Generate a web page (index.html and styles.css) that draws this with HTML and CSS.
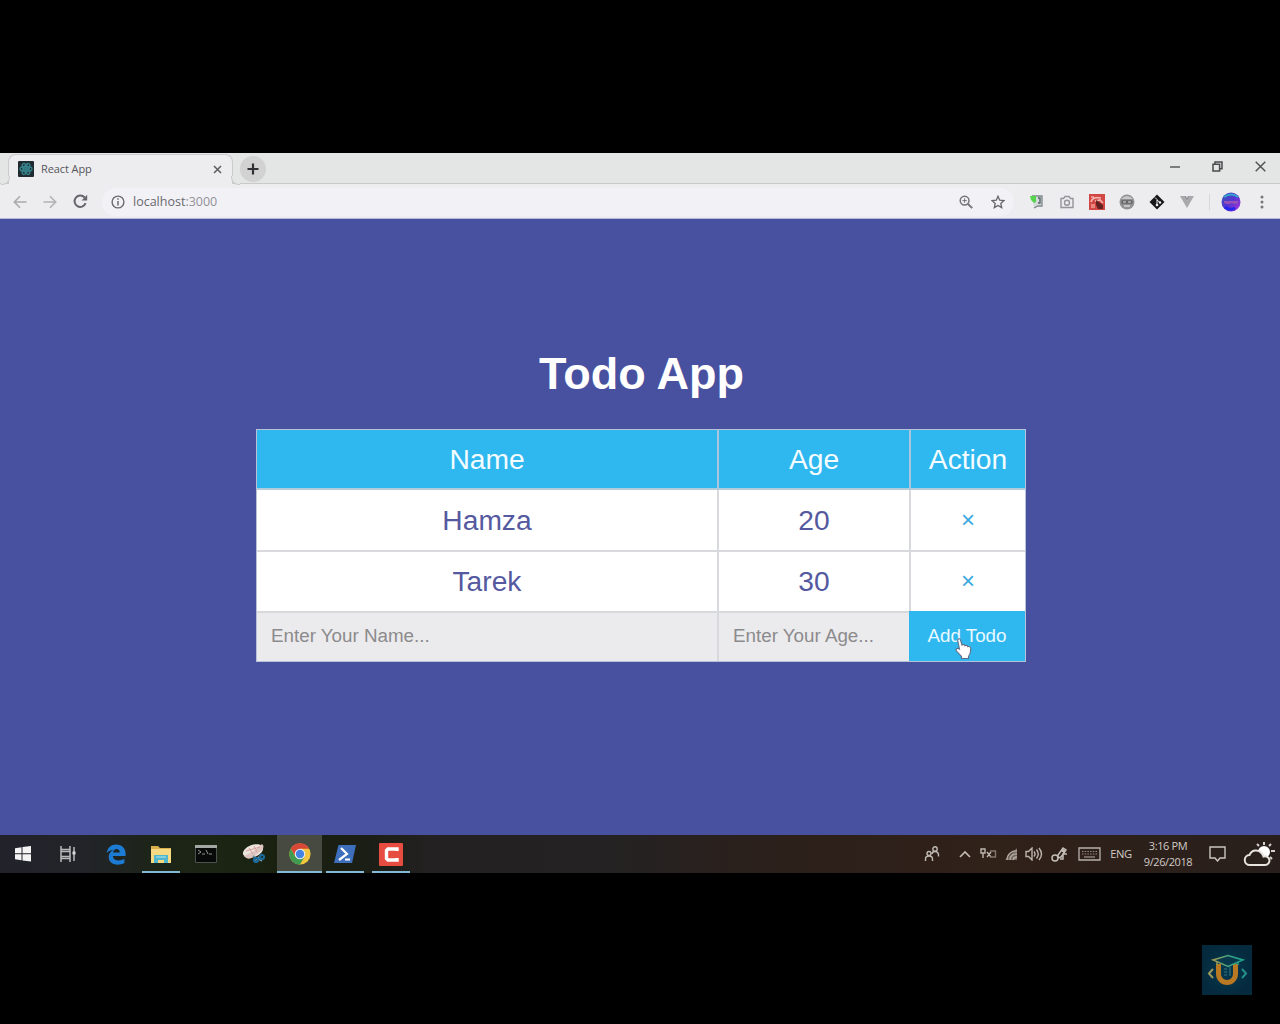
FILE: index.html
```html
<!DOCTYPE html>
<html lang="en">
<head>
<meta charset="utf-8">
<title>React App</title>
<link rel="stylesheet" href="styles.css">
</head>
<body>
<main class="desktop">
  <header class="tabstrip">
    <div class="tab">
      <svg class="favicon" width="16" height="16" viewBox="0 0 16 16"><rect width="16" height="16" rx="1" fill="#202b31"/><g fill="none" stroke="#35808a" stroke-width="1.4"><ellipse cx="8" cy="8" rx="6" ry="2.5"/><ellipse cx="8" cy="8" rx="6" ry="2.5" transform="rotate(60 8 8)"/><ellipse cx="8" cy="8" rx="6" ry="2.5" transform="rotate(120 8 8)"/></g><circle cx="8" cy="8" r="2" fill="#35808a"/></svg>
      <span class="tab-title">React App</span>
      <svg width="9" height="9" viewBox="0 0 9 9"><path d="M1 1l7 7M8 1l-7 7" stroke="#5c5c5f" stroke-width="1.5"/></svg>
    </div>
    <div class="new-tab"><svg width="12" height="12" viewBox="0 0 12 12"><path d="M6 .5v11M.5 6h11" stroke="#303034" stroke-width="2.2"/></svg></div>
    <div class="window-controls">
      <svg width="10" height="12" viewBox="0 0 10 12"><path d="M0 6h10" stroke="#626266" stroke-width="1.6"/></svg>
      <svg width="11" height="11" viewBox="0 0 11 11" fill="none" stroke="#4a4a4d" stroke-width="1.5"><path d="M1 3.200h6.600V10H1zM3 3V1h7v6.800H8"/></svg>
      <svg width="11" height="11" viewBox="0 0 11 11"><path d="M.7.7l9.600 9.600M10.300.7L.7 10.300" stroke="#555558" stroke-width="1.5"/></svg>
    </div>
  </header>

  <nav class="toolbar">
    <div class="nav-buttons">
      <svg width="14" height="14" viewBox="0 0 14 14" fill="none" stroke="#aaaaad" stroke-width="1.6"><path d="M13.500 7H1.500M7 1.300L1.300 7 7 12.700"/></svg>
      <svg width="14" height="14" viewBox="0 0 14 14" fill="none" stroke="#b2b2b5" stroke-width="1.6"><path d="M.5 7h12M7 1.300L12.700 7 7 12.700"/></svg>
      <svg width="15" height="15" viewBox="0 0 15 15"><path d="M12.600 9.200A5.700 5.700 0 1 1 11.600 3.500" fill="none" stroke="#66666a" stroke-width="2"/><path d="M14.200.8v5.600H8.600z" fill="#66666a"/></svg>
    </div>
    <div class="address">
      <svg width="14" height="14" viewBox="0 0 14 14"><circle cx="7" cy="7" r="5.900" fill="none" stroke="#6b6b70" stroke-width="1.400"/><path d="M7 6v4.500M7 3.300v1.500" stroke="#6b6b70" stroke-width="1.500"/></svg>
      <span class="url">localhost<span class="port">:3000</span></span>
      <svg class="magnify" width="14" height="14" viewBox="0 0 14 14" fill="none" stroke="#737379"><circle cx="5.600" cy="5.600" r="4.400" stroke-width="1.500"/><path d="M9 9l4.200 4.200" stroke-width="1.900"/><path d="M3.400 5.600h4.400M5.600 3.400v4.400"/></svg>
      <svg width="14" height="14" viewBox="0 0 14 14"><path d="M7 1.300l1.700 3.900 4.300.4-3.200 2.800.9 4.200L7 10.400l-3.700 2.200.9-4.200L1 5.600l4.300-.4z" fill="none" stroke="#66666b" stroke-width="1.300"/></svg>
    </div>
    <div class="extensions">
      <svg width="16" height="16" viewBox="0 0 16 16"><path d="M3 2h10v10H9l-4 2" fill="#d5dad9" stroke="#7d888a" stroke-width="1.300"/><path d="M9 4h2v5H9" fill="none" stroke="#56666a" stroke-width="1.400"/><path d="M1 2h6v6l-2 1-3-3z" fill="#55d44e"/></svg>
      <svg width="16" height="16" viewBox="0 0 16 16" fill="none" stroke="#95959a" stroke-width="1.400"><path d="M2 4.500h2.500L6 2.500h4l1.500 2H14v9H2z"/><circle cx="8" cy="8.700" r="2.500"/></svg>
      <svg width="16" height="16" viewBox="0 0 16 16"><rect width="16" height="16" fill="#d24743"/><path d="M2 8C3 4 7 3 12 4M6 7l5-1 3 3M2 3h3" stroke="#f1b1ad" stroke-width="1.700" fill="none"/><path d="M7 6l7 5v4H9l-2-4z" fill="#642322"/><path d="M2 10h4v4H2z" fill="#e98780"/></svg>
      <svg width="16" height="16" viewBox="0 0 16 16"><circle cx="8" cy="8" r="7.500" fill="#919194"/><path d="M2 5q6-6 12 0z" fill="#c7c7c9"/><path d="M2.500 6.300h11v3.400h-11z" fill="#626265"/><path d="M4 8h3m2 0h3" stroke="#b7b7b9" stroke-width="1.300"/><path d="M5 12h6" stroke="#c4c4c6" stroke-width="2"/></svg>
      <svg width="16" height="16" viewBox="0 0 16 16"><path d="M8 .5L15.500 8 8 15.500.5 8z" fill="#18181a"/><path d="M6 3.500l2 2v6M8 6l3 2.500" stroke="#eee" fill="none"/><circle cx="8" cy="11" r="1.300" fill="#eee"/><circle cx="11" cy="8.500" r="1.200" fill="#eee"/></svg>
      <svg width="16" height="16" viewBox="0 0 16 16"><path d="M1 2h4l3 5 3-5h4L8 14z" fill="#a9a9ac"/><path d="M5 2h2l1 2 1-2h2L8 7z" fill="#929296"/></svg>
    </div>
    <span class="divider"></span>
    <svg width="20" height="20" viewBox="0 0 20 20"><defs><linearGradient id="avatar" x2="1" y2="1"><stop stop-color="#3558b4"/><stop offset=".5" stop-color="#5635d2"/><stop offset="1" stop-color="#b234dd"/></linearGradient></defs><circle cx="10" cy="10" r="9.500" fill="url(#avatar)"/><path d="M3 5q7-5 14 0" fill="none" stroke="#36a6cf" stroke-width="2"/><path d="M3 9h14v2q-3 2-6 0-4 2-8 0z" fill="#9851b5"/><path d="M4 15q5 4 10 1" fill="none" stroke="#2427ec" stroke-width="3"/></svg>
    <svg class="menu" width="4" height="14" viewBox="0 0 4 14" fill="#77777a"><circle cx="2" cy="2" r="1.500"/><circle cx="2" cy="7" r="1.500"/><circle cx="2" cy="12" r="1.500"/></svg>
  </nav>

  <section class="page">
    <h1>Todo App</h1>
    <div class="todo">
      <div class="row head"><span>Name</span><span>Age</span><span>Action</span></div>
      <div class="row"><span>Hamza</span><span>20</span><span class="remove">×</span></div>
      <div class="row last"><span>Tarek</span><span>30</span><span class="remove">×</span></div>
      <form class="row entry">
        <input type="text" placeholder="Enter Your Name...">
        <input type="text" placeholder="Enter Your Age...">
        <button type="button">Add Todo
          <svg class="pointer" width="18" height="23" viewBox="0 0 18 23"><path d="M4.500 12L2.800 4C2.300 1.300 5 1 5.600 3.300L7 8c1-.8 2.500-.5 3 .7 1.200-.6 2.500 0 2.800 1 1.500-.5 3 .3 3 2 0 4-.5 5.500-2.300 7.800V21.500H6.500V19.500L1.500 14c-1.300-2 .8-3.500 3-2z" fill="#fff" stroke="#626c86" stroke-width="1.100"/></svg>
        </button>
      </form>
    </div>
  </section>

  <footer class="taskbar">
    <div class="apps">
      <div class="app"><svg width="18" height="18" viewBox="0 0 18 18" fill="#f4f4f4"><path d="M1 3.300l6.500-1v6H1zM8.500 2.100L17 1v7.300H8.500zM1 9.300h6.500v6l-6.500-1zM8.500 9.300H17v7.300l-8.500-1.100z"/></svg></div>
      <div class="app gap-after"><svg width="18" height="16" viewBox="0 0 18 16" fill="none" stroke="#b9b9ba" stroke-width="1.500"><path d="M2 0v3.500h9V0M2 16v-3.500h9V16M2 5.500h9v5H2zM2 3v10M11 3v10M15 1v14"/><path d="M13.500 5.500h3v3h-3z" fill="#ddd" stroke="none"/></svg></div>
      <div class="app"><svg width="20" height="21" viewBox="0 0 20 21"><path d="M.6 9.200C1.500 3.500 5 .4 10.300.4c5.800 0 9.300 4.200 9.300 9v2.700H6.900c.2 3.200 2.700 4.400 5.500 4.400 2.300 0 4.200-.6 6-1.700v4.300c-2 1.100-4.300 1.600-7 1.600-5 0-8.700-3-8.700-7.600 0-3 1.600-5.500 4.500-7C4.300 6.300 2.200 7.300.6 9.200zM7 8.500h6.700c0-2.200-1-3.500-3.100-3.500C8.700 5 7.400 6.300 7 8.500z" fill="#1c7bd2"/></svg></div>
      <div class="app open"><svg width="22" height="19" viewBox="0 0 22 19"><path d="M1 1h7l2 2h11v15H1z" fill="#d9ae4d"/><path d="M1 4h20v14H1z" fill="#f5d983"/><path d="M4 18v-8h14v8h-4v-3H8v3z" fill="#50b6cd"/><path d="M6 12h10" stroke="#b9e8e7"/></svg></div>
      <div class="app"><svg width="22" height="18" viewBox="0 0 22 18"><path d="M.5.5h21v17H.5z" fill="#080909" stroke="#4e524f"/><path d="M0 0h22v3H0z" fill="#a4a8a5"/><path d="M3 5l3 2-3 2M7 9h3M11 5l2 4M14 9h3" stroke="#939694" fill="none"/></svg></div>
      <div class="app snip"><svg width="24" height="22" viewBox="0 0 24 22"><ellipse cx="11" cy="8" rx="10.500" ry="6.200" transform="rotate(-20 11 8)" fill="#eee4df"/><path d="M2 13q4 5 9 1l9-7q3-4 0-6l-8 7z" fill="#dfc5c0"/><path d="M4 8l14-4M7 5l4 6M12 3l3 6" stroke="#d5a19e"/><path d="M11 13l9 5M20 11l-7 7" stroke="#6d93a8" stroke-width="1.500"/><g fill="none" stroke="#19699a" stroke-width="2.200"><circle cx="14" cy="17" r="2"/><circle cx="20" cy="14" r="2"/></g></svg></div>
      <div class="app open active"><svg width="22" height="22" viewBox="0 0 22 22"><circle cx="11" cy="11" r="10.600" fill="#f3c63f"/><path d="M1.800 5.700A10.600 10.600 0 0 1 20.200 5.700H11L6.400 13.600z" fill="#d94836"/><path d="M1.800 5.700A10.600 10.600 0 0 0 11 21.600L15.600 13.700H6.400z" fill="#3f9b50"/><circle cx="11" cy="11" r="5.300" fill="#e9edf0"/><circle cx="11" cy="11" r="4.200" fill="#4383e2"/></svg></div>
      <div class="app open"><svg width="22" height="18" viewBox="0 0 22 18"><path d="M4.500 0H22l-4 18H0z" fill="#3d6fbd"/><path d="M7 3l6 6-8 6" fill="none" stroke="#fff" stroke-width="2.200"/><path d="M11 14.500h5" stroke="#fff" stroke-width="2"/></svg></div>
      <div class="app open"><svg width="24" height="23" viewBox="0 0 24 23"><rect width="24" height="23" rx="1" fill="#e64c40"/><path d="M18 8V6H9L7.500 7.500v8L9 17h9v-2" fill="none" stroke="#fff" stroke-width="3.400"/></svg></div>
    </div>
    <div class="tray">
      <div class="people"><svg width="16" height="16" viewBox="0 0 16 16" fill="none" stroke="#c0bab4" stroke-width="1.400"><circle cx="5" cy="7.500" r="2"/><path d="M1.500 15v-2q0-3 3.500-3t3.500 3v2"/><circle cx="11" cy="3" r="2.200"/><path d="M8 8q0-2.500 3-2.500t3.500 3v2"/></svg></div>
      <div class="chevron"><svg width="12" height="8" viewBox="0 0 12 8"><path d="M1 7l5-5 5 5" fill="none" stroke="#c0bab4" stroke-width="1.700"/></svg></div>
      <div class="power"><svg width="17" height="12" viewBox="0 0 17 12" fill="none" stroke="#beb7af" stroke-width="1.400"><path d="M1 1v4h4V1zM3 5v5M7 4l4 5M11 4L7 9"/><path d="M10 3h5.500v6H10" stroke="#81776e"/></svg></div>
      <div class="wifi"><svg width="14" height="14" viewBox="0 0 14 14"><path d="M1 13L13 1v12z" fill="#766b63"/><path d="M3 13a9 9 0 0 1 10-9M6 13a6 6 0 0 1 7-6M9 13a4 4 0 0 1 4-3" fill="none" stroke="#b5aca4" stroke-width="1.300"/></svg></div>
      <div class="sound"><svg width="18" height="14" viewBox="0 0 18 14" fill="none" stroke="#bbb3ac" stroke-width="1.400"><path d="M1 4.500h2.500L7 1v12L3.500 9.500H1zM9 4.500q2 2.500 0 5M11.500 2.500q3.500 4.500 0 9M14 1q5 6 0 12"/></svg></div>
      <div class="pen"><svg width="17" height="16" viewBox="0 0 17 16" fill="none" stroke="#c4beb7" stroke-width="1.500"><circle cx="4" cy="12" r="3"/><path d="M7 12V9l5-7 3 2-5 7-3 1M9 13h3V8h4"/><path d="M11 4l3 2" stroke-width="3"/></svg></div>
      <div class="keyboard"><svg width="23" height="14" viewBox="0 0 23 14"><path d="M1 1h21v12H1z" fill="none" stroke="#b7b1ab" stroke-width="1.300"/><path d="M4 4.500h15M4 7h15" stroke="#938b84" stroke-width="1.200" stroke-dasharray="1.500 1.200"/><path d="M6 10h11" stroke="#938b84" stroke-width="1.400"/></svg></div>
      <div class="language">ENG</div>
      <div class="clock"><span>3:16 PM</span><span>9/26/2018</span></div>
      <div class="notice"><svg width="17" height="16" viewBox="0 0 17 16"><path d="M1 1h15v11h-5l-2.500 3L6 12H1z" fill="none" stroke="#cac5c0" stroke-width="1.400"/></svg></div>
      <div class="weather"><svg width="32" height="26" viewBox="0 0 32 26"><circle cx="21" cy="11" r="6" fill="#fff"/><path d="M21 1v3M14 3l2 2M28 3l-2 2M28 10h4M27 16l2 2" stroke="#d5d0ca" stroke-width="2"/><path d="M7 24a5 5 0 0 1-.5-10 7 7 0 0 1 12-2q1.500 1.500 2 3.500a4.400 4.400 0 1 1 1.500 8.500z" fill="#2b211c" stroke="#e7e3df" stroke-width="2"/></svg></div>
    </div>
  </footer>
</main>
<aside class="channel-mark">
  <svg width="50" height="50" viewBox="0 0 50 50"><defs><radialGradient id="mark"><stop stop-color="#063a50"/><stop offset="1" stop-color="#052a3e"/></radialGradient><linearGradient id="cap"><stop stop-color="#a69a4d"/><stop offset=".5" stop-color="#43a080"/><stop offset="1" stop-color="#1ba68e"/></linearGradient></defs><rect width="50" height="50" fill="url(#mark)"/><path d="M14 19v10a11 11 0 0 0 22 0V19h-5v10a6 6 0 0 1-12 0V19z" fill="#b97822"/><path d="M11 15l15-4.500L41 15l-15 6.500zM15 17v3M36 17v3" fill="#07384b" stroke="url(#cap)" stroke-width="1.500"/><path d="M22 24h3M22 27h3M22 30h3M28 22v9" stroke="#357979" stroke-width="1"/><path d="M11 24l-4 4.500 4 4.500" fill="none" stroke="#9d995b" stroke-width="2"/><path d="M40 24l4 4.500-4 4.500" fill="none" stroke="#258e89" stroke-width="2"/></svg>
</aside>
</body>
</html>
```
FILE: styles.css
```css
* { box-sizing: border-box; }
body { margin: 0; height: 1024px; padding-top: 153px; overflow: hidden; background: #000; font-family: "Open Sans", "Noto Sans", sans-serif; }
svg { display: block; flex: none; }
.desktop { height: 720px; display: flex; flex-direction: column; }

.tabstrip { height: 31px; display: flex; align-items: flex-start; background: #e4e5e5; border-bottom: 1px solid #c9c9cb; padding-left: 8px; }
.tab { position: relative; width: 225px; height: 30px; margin-top: 1px; padding: 0 10px 1px 9px; display: flex; align-items: center; background: #ededef; border: 1px solid #cbcbcd; border-bottom: 0; border-radius: 8px 8px 0 0; }
.tab::before, .tab::after { content: ""; position: absolute; bottom: -1px; width: 8px; height: 8px; border-bottom: 1px solid #cbcbcd; background: #e4e5e5; }
.tab::before { left: -8px; border-right: 1px solid #cbcbcd; border-bottom-right-radius: 8px; }
.tab::after { right: -8px; border-left: 1px solid #cbcbcd; border-bottom-left-radius: 8px; }
.tab-title { flex: 1; margin-left: 7px; font-size: 11px; line-height: 15px; padding-bottom: 1px; color: #55555a; letter-spacing: -.1px; white-space: nowrap; }
.new-tab { width: 26px; height: 26px; margin: 3px 0 0 7px; border-radius: 50%; background: #d2d2d3; display: grid; place-items: center; }
.window-controls { margin: 8px 14px 0 auto; display: flex; gap: 32px; }

.toolbar { height: 35px; display: flex; align-items: center; background: #ededef; border-bottom: 1px solid #b7b8dc; padding: 1px 16px 0 13px; }
.nav-buttons { display: flex; align-items: center; gap: 16px; width: 89px; }
.address { width: 912px; height: 28px; display: flex; align-items: center; padding: 0 9px; border-radius: 14px; background: #f2f1f6; }
.url { margin-left: 8px; color: #69696e; font-size: 12.500px; white-space: nowrap; }
.port { color: #929298; }
.magnify { margin: 0 18px 0 auto; }
.extensions { margin-left: 15px; display: flex; gap: 14px; }
.divider { width: 1px; height: 16px; margin: 0 11px 0 14px; background: #d7d7da; }
.menu { margin-left: auto; }

.page { flex: 1; background: #48519f; font-family: "Liberation Sans", Arial, sans-serif; padding-top: 129px; }
h1 { margin: 0; height: 52px; line-height: 52px; text-align: center; color: #fff; font-size: 45px; text-indent: 3px; }
.todo { width: 770px; margin: 29px 0 0 256px; border: 1px solid #b7c1d7; font-size: 28.200px; }
.row { display: grid; grid-template-columns: 460px 192px 116px; height: 61px; background: #fff; color: #5559a0; line-height: 60px; text-align: center; }
.row > * + * { border-left: 2px solid #d8d9dc; }
.row > * { border-bottom: 2px solid #d8d9dc; min-width: 0; }
.head { height: 60px; line-height: 58px; background: #2fb8ef; color: #f5fcff; }
.head > * + * { border-left-color: #a9c6dc; }
.head > * { border-bottom-color: #b4cbd9; }
.row .remove { color: #3ba9df; font-size: 24px; }
.last { height: 60px; }
.last > .remove { border-bottom-color: #2fb8ef; }
.entry { height: 50px; background: #ebeaec; }
.entry input, .entry button { margin: 0; border: 0; border-radius: 0; background: none; font: 18.800px "Liberation Sans", Arial, sans-serif; }
.entry input { padding: 0 13px 0 14px; }
.entry input + input { border-left: 2px solid #d8d9dc; }
.entry input::placeholder { color: #8b8b8d; opacity: 1; }
.entry button { position: relative; background: #2fb8ef; color: #e9f8ff; padding: 0; white-space: nowrap; }
.pointer { position: absolute; left: 46px; top: 26px; }

.taskbar { height: 38px; display: flex; background: linear-gradient(90deg, #22232a 0, #22242a 80px, #1d2419 150px, #1c2513 220px, #19200f 280px, #1b1e16 370px, #242123 440px, #242223 600px, #2c201b 780px, #302119 1000px, #281f1c 1280px); }
.apps { display: flex; gap: 1px; }
.app { width: 45px; height: 38px; display: grid; place-items: center; position: relative; }
.app.gap-after { margin: 0 2px 0 -1px; }
.app.gap-after + .app + .app { margin-left: -1px; }
.app.gap-after + .app + .app + .app { margin-left: -1px; }
.app.snip { margin-left: 2px; }
.app.open::after { content: ""; position: absolute; bottom: 0; left: 4px; right: 3px; height: 2px; background: #83b9d5; }
.app.active { background: #474a40; }
.app.active + .app { margin-left: -1px; }
.app.active::after { left: 0; right: 0; }
.tray { margin-left: auto; display: flex; align-items: center; color: #d1cbc6; }
.tray > div { display: flex; justify-content: center; flex: none; }
.people { width: 38px; }
.chevron { width: 28px; }
.power { width: 19px; }
.wifi { width: 26px; }
.sound { width: 19px; }
.pen { width: 32px; }
.keyboard { width: 28px; }
.language { width: 36px; font-size: 11.200px; line-height: 15px; padding-bottom: 1px; letter-spacing: -.4px; }
.tray .clock { width: 58px; flex-direction: column; align-items: center; font-size: 11px; line-height: 16px; letter-spacing: -.4px; white-space: nowrap; }
.notice { width: 40px; }
.weather { width: 43px; }
.channel-mark { position: absolute; left: 1202px; top: 945px; }
```
